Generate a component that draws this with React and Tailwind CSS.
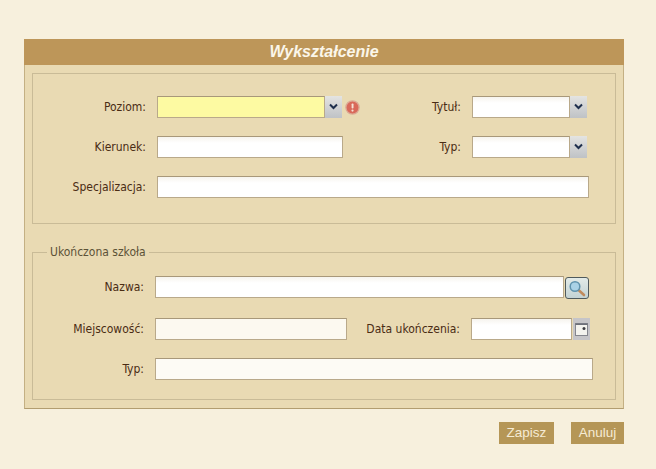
import React from "react";

const labelClass = "shrink-0 text-right text-[12px] leading-[22px] text-[#4a2c14]";
const inputClass =
  "h-[22px] shrink-0 border border-[#b9a98a] border-t-[#a8987a] bg-gradient-to-b from-[#f6f4ee] to-[#ffffff] to-[30%]";

const Chevron = () => (
  <svg width="9" height="7" viewBox="0 0 9 7">
    <path d="M1 1.5 L4.5 5 L8 1.5" fill="none" stroke="#1f2f4d" strokeWidth="2" />
  </svg>
);

const SelectButton = () => (
  <div className="flex h-[22px] w-[17px] shrink-0 items-center justify-center bg-gradient-to-b from-[#e4e4e2] to-[#bfc2c6] pb-[2px]">
    <Chevron />
  </div>
);

const ErrorIcon = () => (
  <svg className="ml-[3px] shrink-0 self-center" width="15" height="15" viewBox="0 0 15 15">
    <circle cx="7.5" cy="7.5" r="6.6" fill="#d9695a" stroke="#dca894" strokeWidth="1.3" />
    <rect x="6.6" y="3.5" width="1.9" height="5" rx="0.8" fill="#f5e2d6" />
    <circle cx="7.5" cy="10.6" r="1.1" fill="#f5e2d6" />
  </svg>
);

const SearchButton = () => (
  <div className="ml-px mt-px flex h-[22px] w-[24px] shrink-0 items-center justify-center rounded-[3px] border border-[#4f5a5c] bg-gradient-to-b from-[#e3ebe8] to-[#c3d3d4]">
    <svg width="18" height="17" viewBox="0 0 18 17">
      <path d="M10.5 10 L16 15" stroke="#c08a5c" strokeWidth="2.6" strokeLinecap="round" />
      <circle cx="7" cy="6.5" r="4.8" fill="#a9d2e6" stroke="#5f93ad" strokeWidth="1.5" />
    </svg>
  </div>
);

const CalendarButton = () => (
  <div className="ml-px flex h-[22px] w-[17px] shrink-0 items-center justify-center bg-[#c6c5c8]">
    <svg width="13" height="13" viewBox="0 0 13 13">
      <rect x="0.5" y="0.5" width="12" height="12" fill="#f4f3ee" stroke="#85868e" />
      <rect x="0.5" y="0.5" width="12" height="1.5" fill="#6d6f78" />
      <circle cx="9" cy="5.5" r="1.5" fill="#3b3b40" />
    </svg>
  </div>
);

export default function App() {
  return (
    <div className="h-[469px] w-[656px] overflow-hidden bg-[#f7f0dd] pl-[24px] pt-[39px] font-['DejaVu_Sans_Condensed','DejaVu_Sans',sans-serif]">
      <div className="h-[370px] w-[600px] border-x border-b border-x-[#c4b083] border-b-[#b29d70] bg-[#e9dab3]">
        <div className="-mx-px flex h-[26px] items-center justify-center bg-[#bd9659] font-['Liberation_Sans',sans-serif] text-[16px] font-bold italic text-[#fbf6ea]">
          Wykształcenie
        </div>

        <div className="mx-[7px] mt-[8px] h-[151px] border border-[#c9bb97] pt-[22px]">
          <div className="flex h-[22px]">
            <div className="flex w-[328px]">
              <label className={`${labelClass} w-[113px]`}>Poziom:</label>
              <div className={`${inputClass} ml-[11px] w-[168px] !bg-none !bg-[#fdfaa2]`} />
              <SelectButton />
              <ErrorIcon />
            </div>
            <label className={`${labelClass} w-[100px]`}>Tytuł:</label>
            <div className={`${inputClass} ml-[11px] w-[98px]`} />
            <SelectButton />
          </div>

          <div className="mt-[18px] flex h-[22px]">
            <div className="flex w-[328px]">
              <label className={`${labelClass} w-[113px]`}>Kierunek:</label>
              <div className={`${inputClass} ml-[11px] w-[186px]`} />
            </div>
            <label className={`${labelClass} w-[100px]`}>Typ:</label>
            <div className={`${inputClass} ml-[11px] w-[98px]`} />
            <SelectButton />
          </div>

          <div className="mt-[18px] flex h-[22px]">
            <label className={`${labelClass} w-[113px]`}>Specjalizacja:</label>
            <div className={`${inputClass} ml-[11px] w-[432px]`} />
          </div>
        </div>

        <fieldset className="mx-[7px] mt-[21px] h-[155px] border border-[#c9bb97]">
          <legend className="ml-[14px] px-[3px] text-[12px] leading-[14px] text-[#5c5238]">Ukończona szkoła</legend>
          <div className="mt-[17px] flex h-[22px]">
            <label className={`${labelClass} w-[111px]`}>Nazwa:</label>
            <div className={`${inputClass} ml-[11px] w-[409px]`} />
            <SearchButton />
          </div>

          <div className="mt-[20px] flex h-[22px]">
            <label className={`${labelClass} w-[111px]`}>Miejscowość:</label>
            <div className={`${inputClass} ml-[11px] w-[192px] !bg-none !bg-[#fcf9f0]`} />
            <label className={`${labelClass} w-[113px]`}>Data ukończenia:</label>
            <div className={`${inputClass} ml-[11px] w-[101px]`} />
            <CalendarButton />
          </div>

          <div className="mt-[18px] flex h-[22px]">
            <label className={`${labelClass} w-[111px]`}>Typ:</label>
            <div className={`${inputClass} ml-[11px] w-[438px] !bg-none !bg-[#fdfbf5]`} />
          </div>
        </fieldset>
      </div>

      <div className="mt-[13px] flex w-[600px] justify-end gap-[17px] font-['Liberation_Sans',sans-serif] text-[13.5px] text-[#f5ebd4]">
        <button className="h-[22px] w-[55px] bg-[#b59656]">Zapisz</button>
        <button className="h-[22px] w-[53px] bg-[#b59656]">Anuluj</button>
      </div>
    </div>
  );
}
